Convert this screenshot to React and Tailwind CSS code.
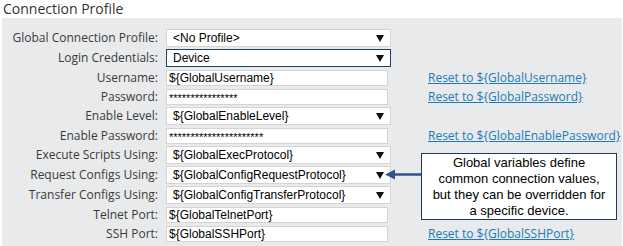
import React from "react";

const label = "font-['Open_Sans',sans-serif] text-[12px] text-[#3a3a3a] text-right w-[156px] shrink-0 leading-none";
const fieldFont = "font-['Liberation_Sans',Arial,sans-serif] text-[12px] text-black";

function Select({ value, focused }) {
  return (
    <div
      className={`h-[18px] w-[225px] bg-white flex items-center justify-between pl-[6px] pr-[6px] border ${
        focused ? "border-[#1f4060]" : "border-[#d4d4d4]"
      } ${fieldFont}`}
    >
      <span className="leading-none">{value}</span>
      <svg width="8" height="7" viewBox="0 0 8 7">
        <polygon points="0,0 8,0 4,7" fill="#111" />
      </svg>
    </div>
  );
}

function Input({ value, pw }) {
  return (
    <div className={`h-[16px] w-[222px] bg-white border border-[#d4d4d4] flex items-center pl-[2px] ${fieldFont}`}>
      {pw ? (
        <span className="text-[11px] leading-none mt-[3px]">{value}</span>
      ) : (
        <span className="leading-none">{value}</span>
      )}
    </div>
  );
}

function Row({ name, h, children, link }) {
  return (
    <div className={`flex items-center ${h}`}>
      <div className={label}>{name}</div>
      <div className="ml-[8px] w-[225px] shrink-0 flex items-center">{children}</div>
      {link && (
        <a className="ml-[37px] font-['Open_Sans',sans-serif] text-[12px] text-[#1b7bb9] underline leading-none whitespace-nowrap">
          {link}
        </a>
      )}
    </div>
  );
}

export default function App() {
  return (
    <div className="w-[623px] h-[246px] bg-white relative overflow-hidden">
      <div className="h-[18px] pl-[3px] pt-[1px] font-['Open_Sans',sans-serif] text-[14px] text-[#333] leading-[16px] whitespace-nowrap">
        Connection Profile
      </div>
      <div className="ml-[2px] mr-[1px] h-[228px] bg-[#e9eaeb] pt-[10px]">
        <Row name="Global Connection Profile:" h="h-[20px]">
          <Select value="<No Profile>" />
        </Row>
        <Row name="Login Credentials:" h="h-[20px]">
          <Select value="Device" focused />
        </Row>
        <Row name="Username:" h="h-[19px]" link="Reset to ${GlobalUsername}">
          <Input value="${GlobalUsername}" />
        </Row>
        <Row name="Password:" h="h-[19px]" link="Reset to ${GlobalPassword}">
          <Input value="****************" pw />
        </Row>
        <Row name="Enable Level:" h="h-[20px]">
          <Select value="${GlobalEnableLevel}" />
        </Row>
        <Row name="Enable Password:" h="h-[19px]" link="Reset to ${GlobalEnablePassword}">
          <Input value="**********************" pw />
        </Row>
        <Row name="Execute Scripts Using:" h="h-[20px]">
          <Select value="${GlobalExecProtocol}" />
        </Row>
        <Row name="Request Configs Using:" h="h-[20px]">
          <Select value="${GlobalConfigRequestProtocol}" />
        </Row>
        <Row name="Transfer Configs Using:" h="h-[20px]">
          <Select value="${GlobalConfigTransferProtocol}" />
        </Row>
        <Row name="Telnet Port:" h="h-[19px]">
          <Input value="${GlobalTelnetPort}" />
        </Row>
        <Row name="SSH Port:" h="h-[19px]" link="Reset to ${GlobalSSHPort}">
          <Input value="${GlobalSSHPort}" />
        </Row>
      </div>

      {/* Callout annotation */}
      <svg className="absolute left-[385px] top-[168px]" width="38" height="13" viewBox="0 0 38 13">
        <line x1="8" y1="6.5" x2="37" y2="6.5" stroke="#2d5686" strokeWidth="2.5" />
        <polygon points="0,6.5 10,1.5 10,11.5" fill="#2d5686" />
      </svg>
      <div className="absolute left-[421px] top-[153px] w-[196px] h-[67px] bg-white border border-[#1f3864] flex flex-col items-center justify-center font-['Liberation_Sans',Arial,sans-serif] text-[13px] leading-[16px] text-black text-center">
        <div>Global variables define</div>
        <div>common connection values,</div>
        <div>but they can be overridden for</div>
        <div>a specific device.</div>
      </div>
    </div>
  );
}
